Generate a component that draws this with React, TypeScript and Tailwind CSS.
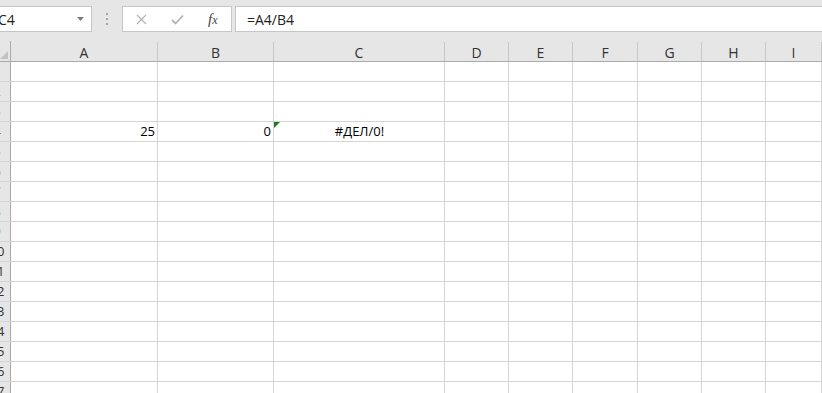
import React from 'react'

const font = { fontFamily: '"Open Sans", "Liberation Sans", "Noto Sans CJK SC", sans-serif' }

const columns = [
  { name: 'A', w: 'w-[147px]' },
  { name: 'B', w: 'w-[116px]' },
  { name: 'C', w: 'w-[171px]' },
  { name: 'D', w: 'w-[64px]' },
  { name: 'E', w: 'w-[64px]' },
  { name: 'F', w: 'w-[65px]' },
  { name: 'G', w: 'w-[64px]' },
  { name: 'H', w: 'w-[64px]' },
  { name: 'I', w: 'flex-1' },
]

const rows = Array.from({ length: 17 }, (_, i) => i + 1)

function Cell({ col, row }: { col: string; row: number }) {
  // только строка 4 содержит данные
  if (row === 4 && col === 'A') return <span className="ml-auto pr-[2px]">25</span>
  if (row === 4 && col === 'B') return <span className="ml-auto pr-[2px]">0</span>
  if (row === 4 && col === 'C')
    return (
      <>
        <span className="absolute left-0 top-0 w-0 h-0 border-t-[6px] border-t-[#1e7b1e] border-r-[6px] border-r-transparent" />
        <span className="mx-auto pl-[1px]">#ДЕЛ/0!</span>
      </>
    )
  return null
}

export default function App() {
  return (
    <div className="w-[822px] h-[393px] overflow-hidden bg-white text-[13px] text-black" style={font}>
      {/* строка формул */}
      <div className="h-[41px] bg-[#e6e6e6] flex items-start pt-[6px]">
        <div className="-ml-[8px] w-[100px] h-[26px] bg-white border border-[#c6c6c6] flex items-center pl-[5px] pr-[7px]">
          <span className="text-[14px] text-[#222]">C4</span>
          <svg className="ml-auto" width="7" height="4" viewBox="0 0 7 4">
            <polygon points="0,0 7,0 3.5,4" fill="#7a7a7a" />
          </svg>
        </div>
        <div className="w-[30px] h-[26px] flex flex-col items-center justify-center gap-[3px]">
          <span className="w-[2px] h-[2px] bg-[#a6a6a6]" />
          <span className="w-[2px] h-[2px] bg-[#a6a6a6]" />
          <span className="w-[2px] h-[2px] bg-[#a6a6a6]" />
        </div>
        <div className="w-[110px] h-[26px] bg-white border border-[#c6c6c6] flex items-center">
          <svg className="ml-[13px]" width="11" height="11" viewBox="0 0 11 11">
            <path d="M1 1 L10 10 M10 1 L1 10" stroke="#b4b4b4" strokeWidth="1.3" />
          </svg>
          <svg className="ml-[24px]" width="13" height="11" viewBox="0 0 13 11">
            <path d="M1 6 L4.5 9.5 L12 1.5" stroke="#b4b4b4" strokeWidth="1.8" fill="none" />
          </svg>
          <span className="ml-[24px] italic text-[#444] text-[15px] leading-none" style={{ fontFamily: '"Liberation Serif", serif' }}>
            f<span className="text-[12px]">x</span>
          </span>
        </div>
        <div className="ml-[3px] -mr-[2px] flex-1 h-[26px] bg-white border border-[#c6c6c6] flex items-center pl-[11px]">
          <span className="text-[14px] text-[#222]">=A4/B4</span>
        </div>
      </div>

      {/* заголовки столбцов */}
      <div className="h-[21px] bg-[#e6e6e6] flex border-b border-[#ababab]">
        <div className="w-[11px] border-r border-[#ababab] relative">
          <svg className="absolute right-[2px] bottom-[2px]" width="8" height="8" viewBox="0 0 8 8">
            <polygon points="8,0 8,8 0,8" fill="#c2c2c2" />
          </svg>
        </div>
        {columns.map((c) => (
          <div key={c.name} className={`${c.w} shrink-0 flex items-center justify-center border-r border-[#c8c8c8] mt-[1px] pt-[1px] text-[14px] text-[#333]`}>
            {c.name}
          </div>
        ))}
      </div>

      {/* строки */}
      {rows.map((r) => (
        <div key={r} className="h-[20px] flex border-b border-[#d4d4d4]">
          <div className="w-[11px] shrink-0 bg-[#e6e6e6] border-r border-[#ababab] overflow-hidden relative">
            <div className="absolute -left-[13px] top-0 w-[20px] h-full flex items-center justify-center text-[13px] text-[#333]">
              {r}
            </div>
          </div>
          {columns.map((c) => (
            <div key={c.name} className={`${c.w} shrink-0 relative flex items-center border-r border-[#d4d4d4]`}>
              <Cell col={c.name} row={r} />
            </div>
          ))}
        </div>
      ))}
    </div>
  )
}
